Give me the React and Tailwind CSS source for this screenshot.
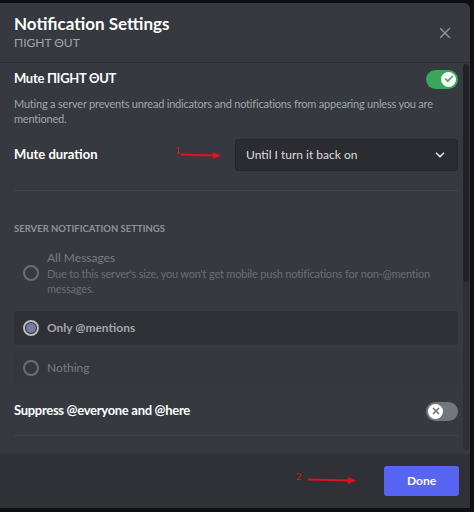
import { Check, X, ChevronDown } from "lucide-react";

const font = { fontFamily: 'Lato, "Open Sans", sans-serif' };

function Toggle({ on }) {
  return (
    <div className={`w-[32px] h-[19px] rounded-full flex items-center px-[2px] ${on ? "bg-[#3ba55c] justify-end" : "bg-[#72767d] justify-start"}`}>
      <div className="w-[15px] h-[15px] rounded-full bg-white flex items-center justify-center">
        {on ? <Check className="w-[10px] h-[10px] text-[#3ba55c]" strokeWidth={4} /> : <X className="w-[10px] h-[10px] text-[#72767d]" strokeWidth={4} />}
      </div>
    </div>
  );
}

function Radio({ checked }) {
  return (
    <div className="w-[16px] h-[16px] shrink-0 rounded-full border-2 border-[#b9bbbe] flex items-center justify-center">
      {checked && <div className="w-[10px] h-[10px] rounded-full bg-[#7a7c9e]" />}
    </div>
  );
}

function Arrow({ width }) {
  return (
    <svg width={width} height="8" viewBox={`0 0 ${width} 8`} className="block">
      <line x1="0" y1="3.5" x2={width - 6} y2="4.5" stroke="#e0131b" strokeWidth="2" />
      <polygon points={`${width - 8},1 ${width},4.5 ${width - 8},8`} fill="#e0131b" />
    </svg>
  );
}

export default function App() {
  return (
    <div className="w-[474px] h-[512px] bg-[#0e0f10] pt-[3px] overflow-hidden" style={font}>
      <div className="w-[470px] h-[505px] bg-[#36393f] rounded-tr-md flex flex-col overflow-hidden">
        {/* Header */}
        <div className="h-[59px] shrink-0 flex items-start justify-between px-[14px] pt-[11px] shadow-[0_1px_0_#2b2d31] z-10">
          <div>
            <div className="text-[17px] leading-[20px] font-bold text-white">Notification Settings</div>
            <div className="text-[12px] leading-[15px] text-[#a3a6aa] mt-[1px]">ΠIGHT ΘUT</div>
          </div>
          <X className="w-[18px] h-[18px] text-[#8e9297] mt-[10px] mr-[2px]" strokeWidth={2} />
        </div>

        {/* Body */}
        <div className="flex-1 flex relative">
          <div className="flex-1 pl-[14px] pr-[5px] pt-[7px]">
            <div className="flex items-center justify-between h-[20px]">
              <div className="text-[13px] font-bold text-white tracking-[-0.3px]">Mute ΠIGHT ΘUT</div>
              <Toggle on />
            </div>
            <p className="text-[11px] leading-[15px] text-[#a3a6aa] mt-[7px] w-[420px] tracking-[-0.2px]">
              Muting a server prevents unread indicators and notifications from appearing unless you are mentioned.
            </p>

            <div className="flex items-center justify-between mt-[13px]">
              <div className="text-[13px] font-bold text-white">Mute duration</div>
              <div className="flex items-center">
                <div className="relative mr-[14px] mt-[-1px]">
                  <span className="absolute -left-[6px] -top-[9px] text-[11px] text-[#e0131b]" style={{ fontFamily: '"Liberation Serif", serif' }}>1</span>
                  <Arrow width={40} />
                </div>
                <div className="w-[223px] h-[32px] bg-[#2a2c31] rounded-[3px] border border-[#25272b] flex items-center justify-between pl-[10px] pr-[10px]">
                  <span className="text-[12px] text-[#dcddde]">Until I turn it back on</span>
                  <ChevronDown className="w-[14px] h-[14px] text-[#dcddde]" strokeWidth={3} />
                </div>
              </div>
            </div>

            <div className="h-px bg-[#42454c] mt-[19px]" />

            <div className="text-[9.5px] font-bold uppercase text-[#8e9297] mt-[31px]">Server Notification Settings</div>

            <div className="mt-[9px] opacity-40 flex items-center gap-[8px] px-[9px] py-[4px]">
              <Radio />
              <div>
                <div className="text-[12px] leading-[17px] text-[#dcddde]">All Messages</div>
                <div className="text-[11px] leading-[15px] text-[#b9bbbe] w-[395px] tracking-[-0.2px]">Due to this server's size, you won't get mobile push notifications for non-@mention messages.</div>
              </div>
            </div>

            <div className="mt-[11px] bg-[#2f3136] rounded-[3px] h-[34px] flex items-center gap-[8px] px-[9px]">
              <Radio checked />
              <div className="text-[12px] font-bold text-[#a3a6aa]">Only @mentions</div>
            </div>

            <div className="mt-[6px] bg-[#33363c] rounded-[3px] h-[34px] flex items-center gap-[8px] px-[9px] opacity-40">
              <Radio />
              <div className="text-[12px] text-[#dcddde]">Nothing</div>
            </div>

            <div className="flex items-center justify-between mt-[16px]">
              <div className="text-[13px] font-bold text-white tracking-[-0.3px]">Suppress @everyone and @here</div>
              <Toggle />
            </div>

            <div className="h-px bg-[#42454c] mt-[14px]" />
          </div>
          {/* Scrollbar */}
          <div className="w-[6px] bg-[#2e3035] mr-[1px] mt-[2px] mb-[4px] rounded-full">
            <div className="h-[218px] bg-[#202225] rounded-full" />
          </div>
        </div>

        {/* Footer */}
        <div className="h-[54px] bg-[#2f3136] flex items-center justify-end pr-[11px] gap-[28px] shrink-0">
          <div className="relative -mt-[3px]">
            <span className="absolute -left-[12px] -top-[8px] text-[11px] text-[#e0131b]" style={{ fontFamily: '"Liberation Serif", serif' }}>2</span>
            <Arrow width={48} />
          </div>
          <button className="w-[75px] h-[30px] bg-[#5865f2] rounded-[3px] text-[12px] font-bold text-white">Done</button>
        </div>
      </div>
    </div>
  );
}
